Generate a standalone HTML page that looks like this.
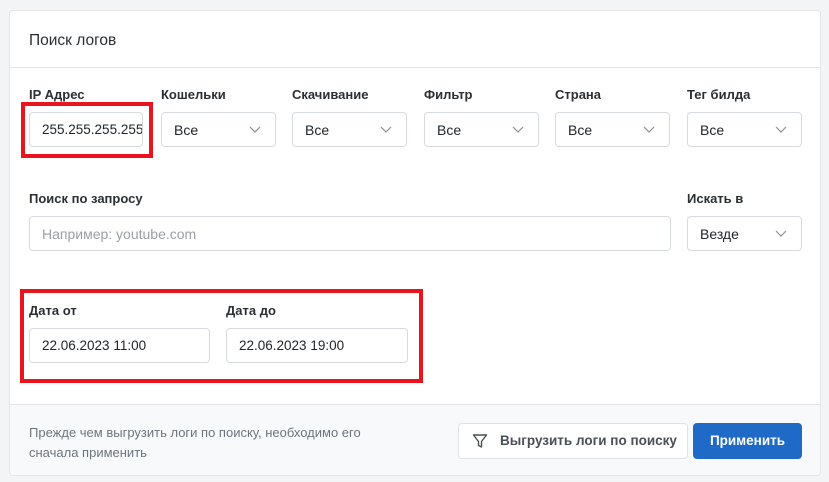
<!DOCTYPE html><html><head><meta charset="utf-8"><style>
body{margin:0;width:829px;height:482px;background:#f3f4f6;font-family:"Liberation Sans",sans-serif;position:relative;overflow:hidden;color:#212529}
.a{position:absolute}
.card{left:9px;top:10px;width:812px;height:466px;background:#fff;border:1px solid #e3e5e8;border-radius:4px;box-sizing:border-box;overflow:hidden}
.lbl{font-size:13px;font-weight:bold;color:#2b2f33}
.in{height:35px;border:1px solid #d7dadf;border-radius:4px;box-sizing:border-box;background:#fff;font-size:14px;line-height:34px;padding-left:12px;color:#212529}
.ch{position:absolute;right:14px;top:10px}
.red{border:4px solid #e8141e;box-sizing:border-box}
</style></head><body>
<div class="a card">
<div class="a" style="left:0;top:56px;width:812px;height:1px;background:#e3e5e8"></div>
<div class="a" style="left:0;top:393px;width:812px;height:80px;background:#f8f9fb;border-top:1px solid #e3e5e8"></div>
</div>
<div class="a" style="left:29px;top:32px;font-size:15.5px;color:#2b2f33">Поиск логов</div>

<div class="a lbl" style="left:29px;top:87px">IP Адрес</div>
<div class="a lbl" style="left:161px;top:87px">Кошельки</div>
<div class="a lbl" style="left:292px;top:87px">Скачивание</div>
<div class="a lbl" style="left:424px;top:87px">Фильтр</div>
<div class="a lbl" style="left:555px;top:87px">Страна</div>
<div class="a lbl" style="left:687px;top:87px">Тег билда</div>

<div class="a in" style="left:29px;top:112px;width:114px;overflow:hidden;white-space:nowrap;font-size:13.5px">255.255.255.255</div>
<div class="a in" style="left:161px;top:112px;width:115px">Все<svg class="ch" width="12" height="12" viewBox="0 0 12 12"><path d="M1 4l5 5 5-5" fill="none" stroke="#8a8f96" stroke-width="1.2"/></svg></div>
<div class="a in" style="left:292px;top:112px;width:115px">Все<svg class="ch" width="12" height="12" viewBox="0 0 12 12"><path d="M1 4l5 5 5-5" fill="none" stroke="#8a8f96" stroke-width="1.2"/></svg></div>
<div class="a in" style="left:424px;top:112px;width:115px">Все<svg class="ch" width="12" height="12" viewBox="0 0 12 12"><path d="M1 4l5 5 5-5" fill="none" stroke="#8a8f96" stroke-width="1.2"/></svg></div>
<div class="a in" style="left:555px;top:112px;width:115px">Все<svg class="ch" width="12" height="12" viewBox="0 0 12 12"><path d="M1 4l5 5 5-5" fill="none" stroke="#8a8f96" stroke-width="1.2"/></svg></div>
<div class="a in" style="left:687px;top:112px;width:115px">Все<svg class="ch" width="12" height="12" viewBox="0 0 12 12"><path d="M1 4l5 5 5-5" fill="none" stroke="#8a8f96" stroke-width="1.2"/></svg></div>
<div class="a red" style="left:21px;top:102px;width:132px;height:56px"></div>

<div class="a lbl" style="left:29px;top:191px">Поиск по запросу</div>
<div class="a lbl" style="left:687px;top:191px">Искать в</div>
<div class="a in" style="left:29px;top:216px;width:642px;color:#9aa0a6">Например: youtube.com</div>
<div class="a in" style="left:687px;top:216px;width:115px">Везде<svg class="ch" width="12" height="12" viewBox="0 0 12 12"><path d="M1 4l5 5 5-5" fill="none" stroke="#8a8f96" stroke-width="1.2"/></svg></div>

<div class="a lbl" style="left:29px;top:303px">Дата от</div>
<div class="a lbl" style="left:226px;top:303px">Дата до</div>
<div class="a in" style="left:29px;top:328px;width:181px;font-size:13.5px">22.06.2023 11:00</div>
<div class="a in" style="left:226px;top:328px;width:182px;font-size:13.5px">22.06.2023 19:00</div>
<div class="a red" style="left:20px;top:289px;width:403px;height:94px"></div>

<div class="a" style="left:29px;top:423px;font-size:13px;line-height:20px;color:#6c757d;width:380px">Прежде чем выгрузить логи по поиску, необходимо его сначала применить</div>
<div class="a" style="left:458px;top:423px;width:230px;height:36px;border:1px solid #dfe2e6;border-radius:4px;box-sizing:border-box;background:#fff;font-size:13.5px;font-weight:bold;color:#4a4f55;line-height:34px;padding-left:41px">
<svg class="a" style="left:13px;top:9px" width="16" height="16" viewBox="0 0 16 16"><path d="M1.5 2h13l-5 6.5v5.5l-3-1.5v-4z" fill="none" stroke="#4a4f55" stroke-width="1.4" stroke-linejoin="round"/></svg>Выгрузить логи по поиску</div>
<div class="a" style="left:693px;top:423px;width:109px;height:36px;border-radius:4px;background:#1f6ac6;color:#fff;font-size:13.5px;font-weight:bold;line-height:36px;text-align:center">Применить</div>
</body></html>
